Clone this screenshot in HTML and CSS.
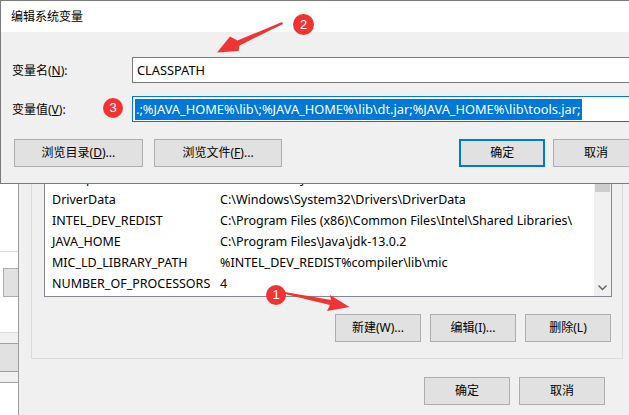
FILE: index.html
```html
<!DOCTYPE html>
<html lang="zh-CN">
<head>
<meta charset="utf-8">
<title>编辑系统变量</title>
<link rel="stylesheet" href="styles.css">
</head>
<body>
<div class="screen">
  <div class="leftwin">
    <div class="lw-top"></div>
    <div class="lw-btn"></div>
    <div class="lw-band"><div class="lw-band-mid"></div></div>
  </div>
  <div class="envwin">
    <div class="group">
      <div class="list">
        <div class="rows">
          <div class="row"><span class="name">ComSpec</span><span class="val">C:\Windows\system32\cmd.exe</span></div>
          <div class="row"><span class="name">DriverData</span><span class="val">C:\Windows\System32\Drivers\DriverData</span></div>
          <div class="row"><span class="name">INTEL_DEV_REDIST</span><span class="val">C:\Program Files (x86)\Common Files\Intel\Shared Libraries\</span></div>
          <div class="row"><span class="name">JAVA_HOME</span><span class="val">C:\Program Files\Java\jdk-13.0.2</span></div>
          <div class="row"><span class="name">MIC_LD_LIBRARY_PATH</span><span class="val">%INTEL_DEV_REDIST%compiler\lib\mic</span></div>
          <div class="row"><span class="name">NUMBER_OF_PROCESSORS</span><span class="val">4</span></div>
        </div>
        <div class="vscroll">
          <div class="thumb"></div>
          <div class="vs-fill"></div>
          <svg class="chev" width="17" height="17" viewBox="0 0 17 17"><polyline points="4.5,6.5 8.5,10.5 12.5,6.5" fill="none" stroke="#606060" stroke-width="1.4"/></svg>
        </div>
      </div>
      <div class="btnrow">
        <button class="btn">新建(W)...</button>
        <button class="btn">编辑(I)...</button>
        <button class="btn">删除(L)</button>
      </div>
    </div>
    <div class="btnrow bottom">
      <button class="btn">确定</button>
      <button class="btn">取消</button>
    </div>
  </div>

  <div class="dialog">
    <div class="titlebar">编辑系统变量</div>
    <div class="dbody">
      <div class="field">
        <span class="label">变量名(<u>N</u>):</span>
        <div class="input"><span class="itext">CLASSPATH</span></div>
      </div>
      <div class="field second">
        <span class="label">变量值(<u>V</u>):</span>
        <div class="input focus"><span class="sel">.;%JAVA_HOME%\lib\;%JAVA_HOME%\lib\dt.jar;%JAVA_HOME%\lib\tools.jar;</span></div>
      </div>
      <div class="dbtns">
        <button class="btn wide">浏览目录(<u>D</u>)...</button>
        <button class="btn wide">浏览文件(<u>F</u>)...</button>
        <button class="btn default">确定</button>
        <button class="btn">取消</button>
      </div>
    </div>
  </div>

  <svg class="arrows" width="629" height="415" viewBox="0 0 629 415">
    <polygon points="282,22 237.5,40.5 230,36.5 217,52.5 238.5,51 239.5,45.5 283,24" fill="#f03434"/>
    <polygon points="285,292 331,300 330,295 349.5,307 327,311 330,305 285,294" fill="#f03434"/>
  </svg>
  <div class="badge b1">1</div>
  <div class="badge b2">2</div>
  <div class="badge b3">3</div>
</div>
</body>
</html>
```

FILE: styles.css
```css
* { box-sizing: border-box; }
html, body { margin: 0; padding: 0; }
body {
  width: 629px;
  height: 415px;
  overflow: hidden;
  background: #ffffff;
  font-family: "Noto Sans", "Noto Sans CJK SC", sans-serif;
  font-size: 12px;
  color: #000;
}
.screen {
  position: relative;
  width: 629px;
  height: 415px;
  overflow: hidden;
  display: flex;
}

/* far left window */
.leftwin {
  flex: none;
  width: 18px;
  height: 415px;
  background: #fff;
  display: flex;
  flex-direction: column;
}
.lw-top {
  height: 252px;
  border-bottom: 1px solid #dcdcdc;
}
.lw-btn {
  margin-top: 16px;
  margin-left: 3px;
  height: 29px;
  background: #e1e1e1;
  border: 1px solid #adadad;
  border-right: none;
}
.lw-band {
  margin-top: 35px;
  height: 51px;
  background: #f0f0f0;
  border-top: 1px solid #dcdcdc;
  border-bottom: 1px solid #a0a0a0;
  padding-top: 10px;
}
.lw-band-mid {
  height: 29px;
  background: #e1e1e1;
  border-top: 1px solid #a0a0a0;
  border-bottom: 1px solid #a0a0a0;
}

/* environment variables window */
.envwin {
  flex: 1;
  height: 415px;
  background: #f0f0f0;
  border-left: 1px solid #9c9c9c;
  padding-top: 150px;
  display: flex;
  flex-direction: column;
}
.group {
  margin-left: 12px;
  margin-right: 6px;
  border: 1px solid #dcdcdc;
  padding: 16px 10px 16px 12px;
}
.list {
  height: 130px;
  background: #fff;
  border: 1px solid #828790;
  display: flex;
}
.rows {
  flex: 1;
  overflow: hidden;
  font-size: 12.5px;
}
.row {
  height: 21px;
  line-height: 21px;
  display: flex;
  white-space: nowrap;
}
.name {
  flex: none;
  width: 175px;
  padding-left: 7px;
}
.val {
  flex: none;
}
.vscroll {
  flex: none;
  width: 17px;
  background: #f0f0f0;
  display: flex;
  flex-direction: column;
}
.thumb {
  margin: 3px 1px 0 1px;
  height: 21px;
  background: #cdcdcd;
}
.vs-fill { flex: 1; }
.chev { display: block; }

.btnrow {
  display: flex;
  justify-content: flex-end;
  gap: 9px;
  margin-top: 17px;
  padding-right: 1px;
}
.btnrow.bottom {
  margin-top: 18px;
  margin-right: 24px;
  padding-right: 0;
}
.btn {
  width: 86px;
  height: 28px;
  padding: 0;
  background: #e1e1e1;
  border: 1px solid #adadad;
  font-family: "Noto Sans", "Noto Sans CJK SC", sans-serif;
  font-size: 12px;
  color: #000;
  line-height: 1;
}

/* front dialog */
.dialog {
  position: absolute;
  left: 0;
  top: 0;
  width: 660px;
  height: 184px;
  border: 1px solid #7a7a7a;
  background: #f0f0f0;
  display: flex;
  flex-direction: column;
}
.titlebar {
  height: 31px;
  line-height: 31px;
  background: #fff;
  padding-left: 10px;
  font-size: 12px;
}
.dbody {
  flex: 1;
  padding: 25px 20px 0 11px;
}
.field {
  display: flex;
  align-items: center;
  height: 26px;
}
.field.second { margin-top: 13px; }
.label {
  flex: none;
  width: 120px;
}
.input {
  flex: 1;
  height: 26px;
  background: #fff;
  border: 1px solid #7a7a7a;
  display: flex;
  align-items: center;
  padding-left: 3px;
  white-space: nowrap;
  overflow: hidden;
  font-size: 12.8px;
}
.itext { padding-left: 1px; }
.input.focus {
  border-color: #0078d7;
  padding-left: 2px;
}
.sel {
  display: inline-block;
  height: 21px;
  line-height: 21px;
  background: #0078d7;
  color: #fff;
  padding: 0 1px;
}
.dbtns {
  display: flex;
  margin-top: 17px;
  margin-left: 2px;
}
.btn.wide { width: 129px; margin-right: 11px; }
.btn.default {
  margin-left: 166px;
  margin-right: 8px;
  border: 2px solid #0078d7;
}

/* annotations */
.arrows {
  position: absolute;
  left: 0;
  top: 0;
  pointer-events: none;
}
.badge {
  position: absolute;
  width: 20px;
  height: 20px;
  border-radius: 50%;
  background: #f03434;
  color: #fff;
  font-family: "Liberation Sans", sans-serif;
  font-size: 13px;
  line-height: 20px;
  text-align: center;
}
.b1 { left: 266px; top: 285px; }
.b2 { left: 293px; top: 14px; width: 21px; height: 21px; line-height: 21px; }
.b3 { left: 103px; top: 98px; }
```
